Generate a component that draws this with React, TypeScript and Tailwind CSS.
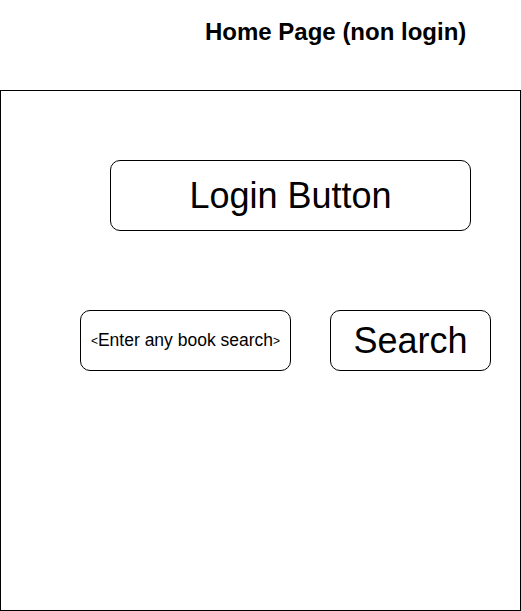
export default function App() {
  return (
    <div className="w-[521px] h-[611px] bg-white text-black font-['Liberation_Sans',Arial,sans-serif]">
      <header className="h-[90px] pt-[20px] pl-[205px]">
        <h1 className="text-[24px] font-bold leading-none">Home Page (non login)</h1>
      </header>
      <main className="w-[521px] h-[521px] border border-black flex flex-col">
        <button className="ml-[109px] mt-[69px] w-[361px] h-[71px] border border-black rounded-[10px] flex items-center justify-center text-[36px] leading-none">
          Login Button
        </button>
        <div className="flex mt-[79px] ml-[79px] gap-[39px]">
          <div className="w-[211px] h-[61px] border border-black rounded-[10px] flex items-center justify-center text-[17.5px] leading-none">
            <span className="text-[12px]">&lt;</span>
            <span>Enter any book search</span>
            <span className="text-[12px]">&gt;</span>
          </div>
          <button className="w-[161px] h-[61px] border border-black rounded-[10px] flex items-center justify-center text-[36px] leading-none">
            Search
          </button>
        </div>
      </main>
    </div>
  );
}
